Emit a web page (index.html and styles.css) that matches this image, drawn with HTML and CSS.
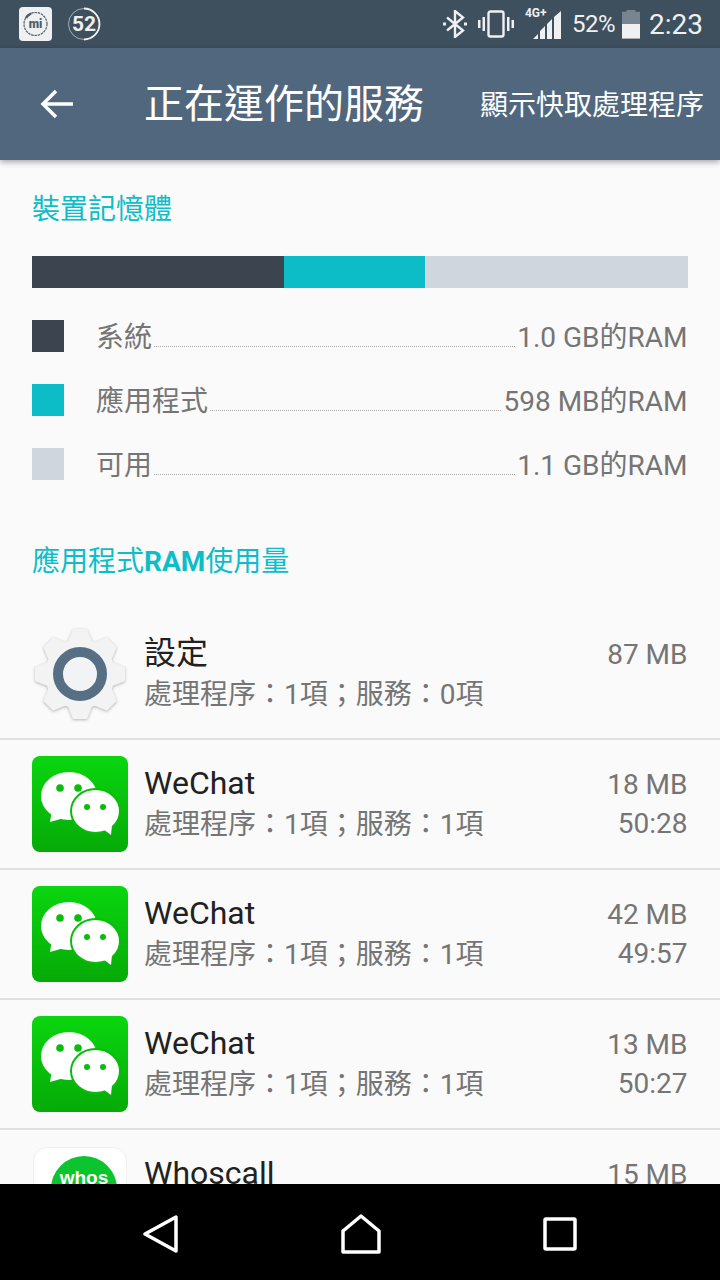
FILE: index.html
```html
<!DOCTYPE html>
<html lang="zh-Hant">
<head>
    <meta charset="UTF-8">
    <meta name="viewport" content="width=device-width, initial-scale=1.0">
    <title>正在運作的服務</title>
    <link rel="stylesheet" href="styles.css">
</head>
<body>
    <svg class="defs" width="0" height="0">
        <defs>
            <linearGradient id="wechat-bg" x1="0" y1="0" x2="0" y2="1">
                <stop offset="0" stop-color="#0ad60f"/>
                <stop offset="1" stop-color="#06aa07"/>
            </linearGradient>
            <symbol id="wechat" viewBox="0 0 96 96">
                <rect width="96" height="96" rx="8" fill="url(#wechat-bg)"/>
                <ellipse cx="37" cy="40" rx="28" ry="24" fill="#fff"/>
                <path d="M18 66l2-12 12 8z" fill="#fff"/>
                <ellipse cx="63.500" cy="55" rx="24.500" ry="22" fill="#fff" stroke="#0abb0c" stroke-width="2"/>
                <path d="M79 79l-8-6 9-4z" fill="#fff"/>
                <circle cx="28" cy="32" r="3.800" fill="#09bd0b"/>
                <circle cx="46" cy="32" r="3.800" fill="#09bd0b"/>
                <circle cx="55" cy="51" r="3" fill="#09bd0b"/>
                <circle cx="71" cy="51" r="3" fill="#09bd0b"/>
            </symbol>
        </defs>
    </svg>

    <header class="status-bar">
        <svg class="mi-icon" width="33" height="34" viewBox="0 0 33 34">
            <rect width="33" height="34" rx="4" fill="#eef0f2"/>
            <circle cx="16.500" cy="17" r="11.500" fill="none" stroke="#4f5c67" stroke-width="1.200" stroke-dasharray="2.500 0.800"/>
            <path d="M7 11a11.500 11.500 0 0 1 5-4.500" fill="none" stroke="#4f5c67" stroke-width="2.400"/>
            <text x="16.500" y="21" text-anchor="middle" class="mi-text">mi</text>
        </svg>
        <div class="badge-52">
            <svg width="34" height="34" viewBox="0 0 34 34">
                <circle cx="17" cy="17" r="15.500" fill="none" stroke="#a3aeb7" stroke-width="1"/>
                <path d="M17 1.500a15.500 15.500 0 0 1 0 31" fill="none" stroke="#f0f2f3" stroke-width="1.800"/>
            </svg>
            <span>52</span>
        </div>
        <div class="status-right">
            <svg class="bt-icon" width="24" height="28" viewBox="0 0 24 28">
                <path d="M4 7.500l16 13-8 6.500V1l8 6.500-16 13" fill="none" stroke="#eef0f2" stroke-width="2.400"/>
                <rect x="0" y="12.500" width="3" height="3" fill="#eef0f2"/>
                <rect x="21" y="12.500" width="3" height="3" fill="#eef0f2"/>
            </svg>
            <svg class="vib-icon" width="36" height="28" viewBox="0 0 36 28">
                <rect x="10.500" y="1.500" width="15" height="25" rx="2" fill="none" stroke="#eef0f2" stroke-width="2.400"/>
                <path d="M0 10h2.500v8H0zM4.500 7H7v14H4.500zM29 7h2.500v14H29zM33.500 10H36v8h-2.500z" fill="#eef0f2"/>
            </svg>
            <div class="signal">
                <span class="net-type">4G+</span>
                <svg width="28" height="28" viewBox="0 0 28 28">
                    <path d="M0 28l5-5v5zM7 28V20l5-5v13zM14 28V13l5-5v20zM21 28V6l7-6v28z" fill="#eef0f2"/>
                </svg>
            </div>
            <span class="batt-text">52%</span>
            <div class="battery"><div class="battery-level"></div></div>
            <span class="clock">2:23</span>
        </div>
    </header>

    <div class="app-bar">
        <svg class="back-icon" width="34" height="30" viewBox="0 0 34 30">
            <path d="M33 15H4M16 2L3 15l13 13" fill="none" stroke="#fff" stroke-width="3.500"/>
        </svg>
        <h1>正在運作的服務</h1>
        <span class="action">顯示快取處理程序</span>
    </div>

    <main class="content">
        <h2 class="section-title">裝置記憶體</h2>
        <div class="mem-bar">
            <div class="seg seg-system"></div>
            <div class="seg seg-apps"></div>
            <div class="seg seg-free"></div>
        </div>
        <div class="legend">
            <div class="legend-row">
                <div class="swatch seg-system"></div>
                <span class="legend-name">系統</span>
                <span class="leader"></span>
                <span class="legend-value">1.0 GB的RAM</span>
            </div>
            <div class="legend-row">
                <div class="swatch seg-apps"></div>
                <span class="legend-name">應用程式</span>
                <span class="leader"></span>
                <span class="legend-value">598 MB的RAM</span>
            </div>
            <div class="legend-row">
                <div class="swatch seg-free"></div>
                <span class="legend-name">可用</span>
                <span class="leader"></span>
                <span class="legend-value">1.1 GB的RAM</span>
            </div>
        </div>

        <h2 class="section-title apps-title">應用程式<b>RAM</b>使用量</h2>
        <ul class="app-list">
            <li class="app-row">
                <svg class="app-icon" width="96" height="96" viewBox="0 0 96 96">
                    <g class="gear">
                        <path d="M41 3h14l6 15H35z"/>
                        <path d="M41 3h14l6 15H35z" transform="rotate(45 48 48)"/>
                        <path d="M41 3h14l6 15H35z" transform="rotate(90 48 48)"/>
                        <path d="M41 3h14l6 15H35z" transform="rotate(135 48 48)"/>
                        <path d="M41 3h14l6 15H35z" transform="rotate(180 48 48)"/>
                        <path d="M41 3h14l6 15H35z" transform="rotate(225 48 48)"/>
                        <path d="M41 3h14l6 15H35z" transform="rotate(270 48 48)"/>
                        <path d="M41 3h14l6 15H35z" transform="rotate(315 48 48)"/>
                        <circle cx="48" cy="48" r="35"/>
                    </g>
                    <circle cx="48" cy="48" r="22" fill="#f2f3f4" stroke="#566f85" stroke-width="10"/>
                </svg>
                <div class="app-info">
                    <div class="app-name">設定</div>
                    <div class="app-sub">處理程序：1項；服務：0項</div>
                </div>
                <div class="app-meta">
                    <div>87 MB</div>
                </div>
            </li>
            <li class="app-row">
                <svg class="app-icon" width="96" height="96"><use href="#wechat"/></svg>
                <div class="app-info">
                    <div class="app-name">WeChat</div>
                    <div class="app-sub">處理程序：1項；服務：1項</div>
                </div>
                <div class="app-meta">
                    <div>18 MB</div>
                    <div>50:28</div>
                </div>
            </li>
            <li class="app-row">
                <svg class="app-icon" width="96" height="96"><use href="#wechat"/></svg>
                <div class="app-info">
                    <div class="app-name">WeChat</div>
                    <div class="app-sub">處理程序：1項；服務：1項</div>
                </div>
                <div class="app-meta">
                    <div>42 MB</div>
                    <div>49:57</div>
                </div>
            </li>
            <li class="app-row">
                <svg class="app-icon" width="96" height="96"><use href="#wechat"/></svg>
                <div class="app-info">
                    <div class="app-name">WeChat</div>
                    <div class="app-sub">處理程序：1項；服務：1項</div>
                </div>
                <div class="app-meta">
                    <div>13 MB</div>
                    <div>50:27</div>
                </div>
            </li>
            <li class="app-row">
                <div class="whos-icon"><div class="whos-circle">whos</div></div>
                <div class="app-info">
                    <div class="app-name">Whoscall</div>
                </div>
                <div class="app-meta">
                    <div>15 MB</div>
                </div>
            </li>
        </ul>
    </main>

    <nav class="nav-bar">
        <svg width="36" height="40" viewBox="0 0 36 40">
            <path d="M33 3v34L2 20z" fill="none" stroke="#fff" stroke-width="3.500" stroke-linejoin="round"/>
        </svg>
        <svg width="40" height="40" viewBox="0 0 40 40">
            <path d="M2 38V17L20 2l18 15v21z" fill="none" stroke="#fff" stroke-width="3.500" stroke-linejoin="round"/>
        </svg>
        <svg width="34" height="34" viewBox="0 0 34 34">
            <rect x="2" y="2" width="30" height="30" rx="1" fill="none" stroke="#fff" stroke-width="3.500"/>
        </svg>
    </nav>
</body>
</html>
```

FILE: styles.css
```css
* {
    box-sizing: border-box;
}

html, body {
    margin: 0;
    padding: 0;
}

body {
    width: 720px;
    height: 1280px;
    display: flex;
    flex-direction: column;
    overflow: hidden;
    background-color: #fafafa;
    font-family: Roboto, "Noto Sans CJK TC", sans-serif;
}

.defs {
    position: absolute;
}

/* status bar */
.status-bar {
    height: 48px;
    flex: none;
    display: flex;
    align-items: center;
    padding: 0 17px 0 19px;
    background-color: #3e4f5e;
    color: #eef0f2;
}

.mi-text {
    font-family: Roboto, sans-serif;
    font-size: 12px;
    font-weight: 900;
    fill: #4f5c67;
}

.badge-52 {
    width: 34px;
    height: 34px;
    margin-left: 15px;
    position: relative;
}

.badge-52 span {
    position: absolute;
    left: 0;
    right: 0;
    top: 5px;
    text-align: center;
    font-size: 21px;
    line-height: 24px;
    font-weight: 700;
}

.status-right {
    margin-left: auto;
    display: flex;
    align-items: center;
}

.vib-icon {
    margin-left: 11px;
}

.signal {
    width: 36px;
    height: 30px;
    margin-left: 11px;
    position: relative;
    display: flex;
    justify-content: flex-end;
    align-items: flex-end;
}

.net-type {
    position: absolute;
    left: 0;
    top: -3px;
    font-size: 12px;
    line-height: 14px;
    font-weight: 700;
}

.batt-text {
    margin-left: 11px;
    font-size: 24px;
    letter-spacing: -0.5px;
}

.battery {
    width: 18px;
    height: 29px;
    margin-left: 7px;
    display: flex;
    align-items: flex-end;
    background-color: #76858f;
    clip-path: polygon(25% 0, 75% 0, 75% 8%, 100% 8%, 100% 100%, 0 100%, 0 8%, 25% 8%);
}

.battery-level {
    width: 100%;
    height: 50%;
    background-color: #eef0f2;
}

.clock {
    margin-left: 9px;
    font-size: 28px;
}

/* app bar */
.app-bar {
    height: 112px;
    flex: none;
    display: flex;
    align-items: center;
    padding: 0 16px 0 40px;
    background-color: #50677d;
    color: #fff;
    box-shadow: 0 2px 6px rgba(0, 0, 0, 0.35);
    position: relative;
    z-index: 1;
}

.back-icon {
    flex: none;
}

h1 {
    margin: 2px 0 0 70px;
    font-size: 40px;
    font-weight: 400;
    line-height: 56px;
    white-space: nowrap;
}

.action {
    margin: 0 0 2px auto;
    font-size: 28px;
    white-space: nowrap;
}

/* content */
.content {
    flex: 1;
    min-height: 0;
    overflow: hidden;
}

.section-title {
    margin: 30px 32px 0;
    font-size: 28px;
    font-weight: 400;
    line-height: 40px;
    color: #0dbdc8;
}

.section-title b {
    font-weight: 700;
}

.mem-bar {
    display: flex;
    height: 32px;
    margin: 26px 32px 0;
}

.seg-system {
    background-color: #3b444f;
}

.seg-apps {
    background-color: #0cbdc7;
}

.seg-free {
    background-color: #cfd6de;
}

.seg-system.seg {
    width: 252px;
}

.seg-apps.seg {
    width: 141px;
}

.seg-free.seg {
    flex: 1;
}

.legend {
    margin: 32px 32.5px 0 32px;
    display: flex;
    flex-direction: column;
    gap: 32px;
}

.legend-row {
    height: 32px;
    display: flex;
    align-items: center;
    font-size: 28px;
    color: #757575;
}

.swatch {
    width: 32px;
    height: 32px;
    flex: none;
}

.legend-name {
    margin: 0 0 2px 32px;
    white-space: nowrap;
}

.leader {
    flex: 1;
    align-self: flex-end;
    height: 6px;
    margin: 0 2px 5px;
    border-bottom: 1px dotted #a8a8a8;
}

.legend-value {
    margin-bottom: 2px;
    white-space: nowrap;
}

.apps-title {
    margin-top: 62px;
}

.app-list {
    margin: 28px 0 0;
    padding: 0;
    list-style: none;
}

.app-row {
    height: 130px;
    display: flex;
    align-items: flex-start;
    padding: 16px 32.5px 0 32px;
    border-bottom: 2px solid #e0e0e0;
}

.app-icon {
    flex: none;
    display: block;
}

.gear {
    fill: #f3f3f4;
    filter: drop-shadow(0 1px 1.5px rgba(0, 0, 0, 0.28));
}

.app-info {
    margin-left: 16px;
    flex: 1;
}

.app-name {
    font-size: 32px;
    line-height: 40px;
    margin-top: 7px;
    color: #212121;
}

.app-sub {
    font-size: 28px;
    line-height: 40px;
    margin-top: 2px;
    color: #757575;
}

.app-meta {
    font-size: 28px;
    line-height: 39px;
    margin-top: 9px;
    text-align: right;
    color: #757575;
}

.whos-icon {
    width: 94px;
    height: 94px;
    flex: none;
    margin: 1px;
    display: flex;
    justify-content: center;
    padding: 8px 0 0 8px;
    background-color: #fff;
    border: 1px solid #efefef;
    border-radius: 14px;
}

.whos-circle {
    width: 66px;
    height: 66px;
    border-radius: 50%;
    background-color: #0cc42e;
    color: #fff;
    font-family: "Liberation Sans", sans-serif;
    font-size: 19px;
    font-weight: 700;
    line-height: 44px;
    text-align: center;
}

/* nav bar */
.nav-bar {
    height: 96px;
    flex: none;
    display: flex;
    align-items: center;
    justify-content: space-between;
    padding: 4px 143px 0;
    background-color: #000;
    position: relative;
    z-index: 1;
}
```
